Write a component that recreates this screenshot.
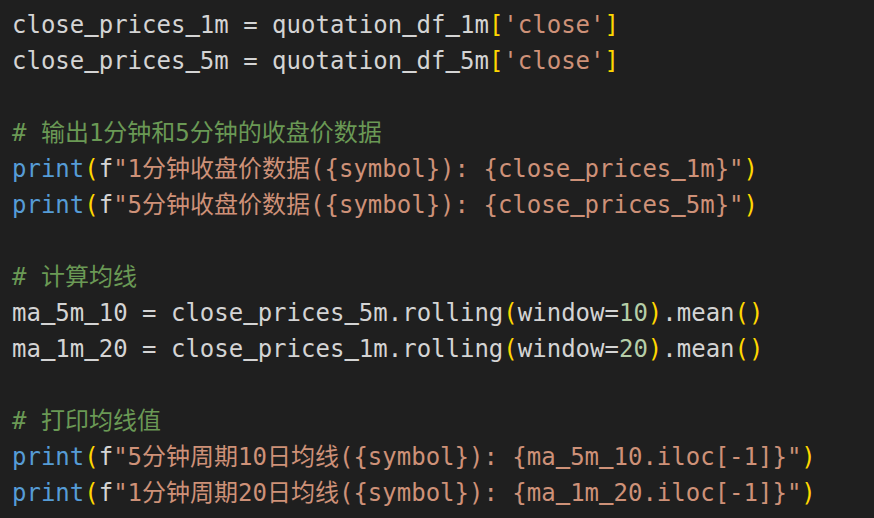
import React from "react";

const C = {
  t: "text-[#d4d4d4]",
  s: "text-[#ce9178]",
  c: "text-[#6a9955]",
  f: "text-[#569cd6]",
  b: "text-[#ffd700]",
  n: "text-[#b5cea8]",
};

type Seg = [keyof typeof C, string];

const lines: Seg[][] = [
  [["t", "close_prices_1m = quotation_df_1m"], ["b", "["], ["s", "'close'"], ["b", "]"]],
  [["t", "close_prices_5m = quotation_df_5m"], ["b", "["], ["s", "'close'"], ["b", "]"]],
  [],
  [["c", "# 输出1分钟和5分钟的收盘价数据"]],
  [["f", "print"], ["b", "("], ["t", "f"], ["s", "\"1分钟收盘价数据({symbol}): {close_prices_1m}\""], ["b", ")"]],
  [["f", "print"], ["b", "("], ["t", "f"], ["s", "\"5分钟收盘价数据({symbol}): {close_prices_5m}\""], ["b", ")"]],
  [],
  [["c", "# 计算均线"]],
  [["t", "ma_5m_10 = close_prices_5m.rolling"], ["b", "("], ["t", "window="], ["n", "10"], ["b", ")"], ["t", ".mean"], ["b", "()"]],
  [["t", "ma_1m_20 = close_prices_1m.rolling"], ["b", "("], ["t", "window="], ["n", "20"], ["b", ")"], ["t", ".mean"], ["b", "()"]],
  [],
  [["c", "# 打印均线值"]],
  [["f", "print"], ["b", "("], ["t", "f"], ["s", "\"5分钟周期10日均线({symbol}): {ma_5m_10.iloc[-1]}\""], ["b", ")"]],
  [["f", "print"], ["b", "("], ["t", "f"], ["s", "\"1分钟周期20日均线({symbol}): {ma_1m_20.iloc[-1]}\""], ["b", ")"]],
];

function Text({ txt }: { txt: string }) {
  const parts = txt.split(/(_)/);
  return (
    <>
      {parts.map((p, i) =>
        p === "_" ? (
          <span key={i} className="relative -top-[3px] [text-shadow:0_1px_0_currentColor]">
            _
          </span>
        ) : (
          <React.Fragment key={i}>{p}</React.Fragment>
        )
      )}
    </>
  );
}

export default function App() {
  return (
    <div
      className="w-[874px] h-[518px] bg-[#1f1f1f] pt-[7px] pl-[12px] overflow-hidden"
      style={{ fontFamily: '"DejaVu Sans Mono", "Noto Sans CJK SC", monospace' }}
    >
      {lines.map((segs, i) => (
        <div key={i} className="h-[36px] leading-[36px] text-[24px] whitespace-pre">
          {segs.map(([k, txt], j) => (
            <span key={j} className={C[k]}>
              <Text txt={txt} />
            </span>
          ))}
        </div>
      ))}
    </div>
  );
}
